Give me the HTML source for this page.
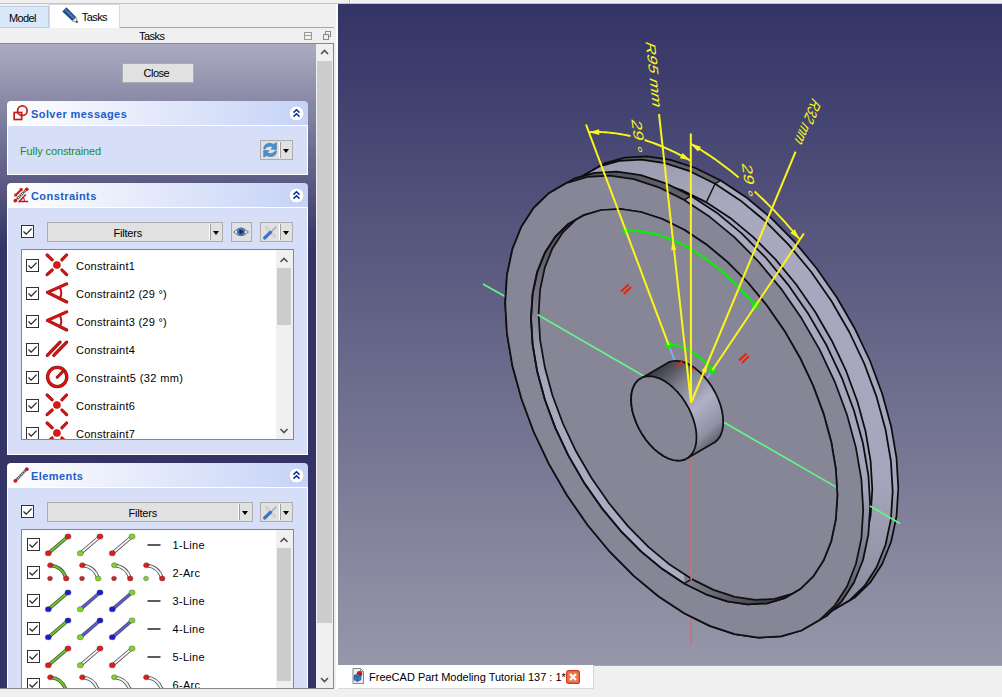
<!DOCTYPE html>
<html><head><meta charset="utf-8"><title>FreeCAD Part Modeling Tutorial 137</title>
<style>
*{box-sizing:border-box;margin:0;padding:0}
html,body{width:1002px;height:697px;overflow:hidden;background:#f0f0f0}
body{position:relative;font-family:"Liberation Sans",sans-serif;font-size:11px;color:#000}
.abs{position:absolute}
.t{position:absolute;white-space:nowrap;line-height:14px;height:14px}
#view{position:absolute;left:338px;top:4px;width:664px;height:661px;background:linear-gradient(#333366,#9797aa);overflow:hidden}
#panel{position:absolute;left:0;top:44px;width:316px;height:644px;background:linear-gradient(#ababc1 0,#333365 205px,#333365 100%);overflow:hidden}
.grp-h{position:absolute;left:7px;width:301px;height:24px;border-radius:4px 4px 0 0;background:linear-gradient(90deg,#ffffff 0,#f4f6fd 20%,#c6d3f7 100%)}
.grp-h .ti{position:absolute;left:24px;top:5.5px;font-weight:bold;color:#215dc6;font-size:11px;line-height:14px;white-space:nowrap;letter-spacing:0.42px}
.grp-b{position:absolute;left:7px;width:301px;background:#d6dff7;border:1px solid #fff}
.btn{position:absolute;background:#e1e1e1;border:1px solid #adadad}
.sep{position:absolute;width:1px;background:#a0a0a0}
.sepw{position:absolute;width:1px;background:#fff}
.arr{position:absolute;width:0;height:0;border-left:3.5px solid transparent;border-right:3.5px solid transparent;border-top:4px solid #000}
.cb{position:absolute;width:13px;height:13px;background:#fff;border:1px solid #333}
.list{position:absolute;background:#fff;border:1px solid #828790;overflow:hidden}
.sb{position:absolute;background:#f0f0f0}
.thumb{position:absolute;background:#cdcdcd}
.row{position:absolute;left:0;height:28px;width:254px}
</style></head><body>
<div class="abs" style="left:0;top:3px;width:1002px;height:1px;background:#c4c4c4"></div>
<div class="abs" style="left:349px;top:0;width:1px;height:3px;background:#b8b8b8"></div>
<div class="abs" style="left:350px;top:0;width:1px;height:3px;background:#fff"></div>
<div class="abs" style="left:0;top:27px;width:334px;height:1px;background:#a8a8a8"></div>
<div class="abs" style="left:0;top:6px;width:49px;height:22px;background:#d8e8f8;border:1px solid #c0d0e0;border-left:none"></div>
<div class="t" style="left:9px;top:11px;letter-spacing:-0.6px">Model</div>
<div class="abs" style="left:49px;top:4px;width:71px;height:24px;background:#fff;border:1px solid #d9d9d9;border-bottom:none"></div>
<svg class="abs" style="left:62px;top:7px;overflow:visible" width="16" height="16" viewBox="0 0 16 16" ><path d="M4.4 0.2 L0.3 4.4 L10.4 14 L14.2 10.3 Z" fill="#1f4a80"/><path d="M3.2 2.6 L12.6 11.9" stroke="#4a82c8" stroke-width="1.7"/><path d="M10.4 14 L14.2 10.3 L15.6 15.7 Z" fill="#f4f4f4" stroke="#555" stroke-width="0.5"/><path d="M13.2 14.9 L15.1 13.4 L15.7 15.8 Z" fill="#1a2440"/></svg>
<div class="t" style="left:81.7px;top:10px;letter-spacing:-0.55px">Tasks</div>
<div class="t" style="left:139px;top:29px;letter-spacing:-0.55px">Tasks</div>
<svg class="abs" style="left:300px;top:29px" width="34" height="14" viewBox="0 0 34 14"><rect x="4.5" y="3.5" width="7" height="7" fill="none" stroke="#9a9a9a"/><path d="M4.5 6.5 H11.5" stroke="#9a9a9a"/><rect x="25.5" y="2.5" width="5" height="5" fill="none" stroke="#8a8a8a"/><rect x="23.5" y="5.5" width="5" height="5" fill="#f0f0f0" stroke="#8a8a8a"/></svg>
<div class="abs" style="left:0;top:43px;width:334px;height:1px;background:#828790"></div>
<div class="sb" style="left:316px;top:44px;width:17px;height:644px"></div>
<div class="thumb" style="left:317px;top:61px;width:15px;height:562px"></div>
<svg class="abs" style="left:0;top:0;overflow:visible" width="1" height="1"><path d="M321.0 54.0 L324.5 50.5 L328.0 54.0" fill="none" stroke="#505050" stroke-width="1.6"/></svg>
<svg class="abs" style="left:0;top:0;overflow:visible" width="1" height="1"><path d="M321.0 678.0 L324.5 681.5 L328.0 678.0" fill="none" stroke="#505050" stroke-width="1.6"/></svg>
<div class="abs" style="left:333px;top:44px;width:1px;height:645px;background:#828790"></div>
<div class="abs" style="left:0;top:688px;width:334px;height:1px;background:#828790"></div>
<div class="abs" style="left:336px;top:4px;width:2px;height:685px;background:#fff"></div>
<div id="panel">
<div class="btn" style="left:122px;top:19px;width:72px;height:20px"></div>
<div class="t" style="left:143.5px;top:22px;letter-spacing:-0.5px">Close</div>
<div class="grp-h" style="top:57px"><svg class="abs" style="left:6px;top:4px" width="16" height="16" viewBox="0 0 16 16"><circle cx="9.35" cy="5.65" r="4.8" fill="none" stroke="#c81a1a" stroke-width="1.7"/><rect x="1.15" y="7.5" width="7.5" height="7" fill="none" stroke="#c81a1a" stroke-width="1.7"/></svg><div class="ti">Solver messages</div><svg class="abs" style="left:281px;top:4px" width="17" height="17" viewBox="0 0 17 17"><circle cx="8.5" cy="8.5" r="7.5" fill="#fff" stroke="#c3cdee" stroke-width="1"/><path d="M5.5 7.6 L8.5 4.8 L11.5 7.6 M5.5 11.6 L8.5 8.8 L11.5 11.6" fill="none" stroke="#0d2b9c" stroke-width="1.5"/></svg></div>
<div class="grp-b" style="top:81px;height:50px"></div>
<div class="t" style="left:20px;top:100px;color:#1f8b1f;letter-spacing:-0.12px">Fully constrained</div>
<div class="btn" style="left:260px;top:96px;width:33px;height:20px"></div>
<svg class="abs" style="left:263px;top:98px;overflow:visible" width="15" height="16" viewBox="0 0 15 16" ><path d="M0.6 6.6 C1 2 6 -0.4 10.6 2.4 L13.4 0.6 L13.6 7.4 L8 7.2 L10 5.2 C7 3.4 3.6 4.2 1.6 7.4 Z" fill="#4d8fd0" stroke="#2e6db0" stroke-width="0.5"/><path d="M13.6 9.2 C13.2 13.8 8.2 16.2 3.6 13.4 L0.8 15.2 L0.6 8.4 L6.2 8.6 L4.2 10.6 C7.2 12.4 10.6 11.6 12.6 8.4 Z" fill="#4d8fd0" stroke="#2e6db0" stroke-width="0.5"/></svg>
<div class="sepw" style="left:279px;top:98px;height:16px"></div><div class="sep" style="left:280px;top:98px;height:16px"></div>
<div class="arr" style="left:283px;top:105px"></div>
<div class="grp-h" style="top:139px"><svg class="abs" style="left:6px;top:4px" width="16" height="16" viewBox="0 0 16 16"><path d="M2.6 8.2 L8.3 2.5" stroke="#d81010" stroke-width="2"/><path d="M1.2 9.6 L1.6 6 L4.8 9.2 Z M9.7 1.1 L6.1 1.5 L9.3 4.7 Z" fill="#d81010"/><path d="M2.2 13.8 L13.8 2.2" stroke="#444" stroke-width="2.4"/><path d="M2.2 13.8 L13.8 2.2" stroke="#f4f4f4" stroke-width="1.4" stroke-dasharray="1 1"/><circle cx="2.3" cy="13.8" r="1.8" fill="#d81010"/><circle cx="13.8" cy="2.2" r="1.8" fill="#d81010"/><path d="M15.2 14.4 H6.2 L12.8 7.4" fill="none" stroke="#c01818" stroke-width="1.5"/><path d="M10.2 10.4 Q11.6 12 11.4 14.4" fill="none" stroke="#c01818" stroke-width="1.1"/></svg><div class="ti">Constraints</div><svg class="abs" style="left:281px;top:4px" width="17" height="17" viewBox="0 0 17 17"><circle cx="8.5" cy="8.5" r="7.5" fill="#fff" stroke="#c3cdee" stroke-width="1"/><path d="M5.5 7.6 L8.5 4.8 L11.5 7.6 M5.5 11.6 L8.5 8.8 L11.5 11.6" fill="none" stroke="#0d2b9c" stroke-width="1.5"/></svg></div>
<div class="grp-b" style="top:163px;height:248px"></div>
<div class="cb" style="left:21px;top:181px"><svg class="abs" style="left:0;top:0" width="11" height="11" viewBox="0 0 11 11"><path d="M1.5 5.5 L4.2 8.2 L9.6 2.6" fill="none" stroke="#222" stroke-width="1.2"/></svg></div>
<div class="btn" style="left:47px;top:178px;width:176px;height:20px"></div>
<div class="t" style="left:113.5px;top:182px;letter-spacing:-0.2px">Filters</div>
<div class="sepw" style="left:209px;top:180px;height:16px"></div><div class="sep" style="left:210px;top:180px;height:16px"></div>
<div class="arr" style="left:213px;top:187px"></div>
<div class="btn" style="left:231px;top:178px;width:21px;height:20px"></div>
<svg class="abs" style="left:233px;top:182px;overflow:visible" width="16" height="12" viewBox="0 0 16 12" ><path d="M0.6 6 Q8 -1.4 15.4 6 Q8 13.4 0.6 6 Z" fill="#fafafa" stroke="#6a6a6a" stroke-width="1"/><circle cx="8" cy="5.8" r="4.3" fill="#3f77c4"/><circle cx="8" cy="5.8" r="2.1" fill="#2a3040"/></svg>
<div class="btn" style="left:260px;top:178px;width:33px;height:20px"></div>
<svg class="abs" style="left:262px;top:180px;overflow:visible" width="16" height="16" viewBox="0 0 16 16" ><path d="M3.6 2.4 Q2.4 5.2 5.2 6.2 L12.2 13.8 L14 12.2 L7 4.8 Q7 1.6 3.6 2.4 Z" fill="#d6d6d6" stroke="#c2c2c2" stroke-width="0.6"/><path d="M14.3 2.6 L8.4 8.6" stroke="#9db4d4" stroke-width="1.9"/><path d="M8.4 8.4 L2.6 14" stroke="#3a74c0" stroke-width="3.2" stroke-linecap="round"/></svg>
<div class="sepw" style="left:279px;top:180px;height:16px"></div><div class="sep" style="left:280px;top:180px;height:16px"></div>
<div class="arr" style="left:283px;top:187px"></div>
<div class="list" style="left:21px;top:205px;width:273px;height:191px"><div class="row" style="top:2px"><div class="cb" style="left:4px;top:7px"><svg class="abs" style="left:0;top:0" width="11" height="11" viewBox="0 0 11 11"><path d="M1.5 5.5 L4.2 8.2 L9.6 2.6" fill="none" stroke="#222" stroke-width="1.2"/></svg></div><svg class="abs" style="left:24px;top:2px;overflow:visible" width="22" height="22" viewBox="0 0 22 22" ><path d="M1.1 1 L6.2 5.8 M20.6 1 L15.9 5.8 M1.1 20.6 L6.2 16 M20.6 20.6 L15.9 16" stroke="#8a1010" stroke-width="3.1" stroke-linecap="round"/><path d="M1.1 1 L6.2 5.8 M20.6 1 L15.9 5.8 M1.1 20.6 L6.2 16 M20.6 20.6 L15.9 16" stroke="#e01212" stroke-width="1.8" stroke-linecap="round"/><circle cx="10.9" cy="11" r="3.6" fill="#e01616" stroke="#a01010" stroke-width="0.5"/></svg><div class="t" style="left:54px;top:6.5px;letter-spacing:0.26px">Constraint1</div></div><div class="row" style="top:30px"><div class="cb" style="left:4px;top:7px"><svg class="abs" style="left:0;top:0" width="11" height="11" viewBox="0 0 11 11"><path d="M1.5 5.5 L4.2 8.2 L9.6 2.6" fill="none" stroke="#222" stroke-width="1.2"/></svg></div><svg class="abs" style="left:24px;top:2px;overflow:visible" width="22" height="22" viewBox="0 0 22 22" ><path d="M20.7 1.9 L1.4 10.4 L20.7 20" fill="none" stroke="#8a1010" stroke-width="3.1" stroke-linecap="round" stroke-linejoin="round"/><path d="M20.7 1.9 L1.4 10.4 L20.7 20" fill="none" stroke="#e01212" stroke-width="1.8" stroke-linecap="round" stroke-linejoin="round"/><path d="M14 6 Q16.6 11 14 16.2" fill="none" stroke="#c01212" stroke-width="2"/></svg><div class="t" style="left:54px;top:6.5px;letter-spacing:0.26px">Constraint2 (29 °)</div></div><div class="row" style="top:58px"><div class="cb" style="left:4px;top:7px"><svg class="abs" style="left:0;top:0" width="11" height="11" viewBox="0 0 11 11"><path d="M1.5 5.5 L4.2 8.2 L9.6 2.6" fill="none" stroke="#222" stroke-width="1.2"/></svg></div><svg class="abs" style="left:24px;top:2px;overflow:visible" width="22" height="22" viewBox="0 0 22 22" ><path d="M20.7 1.9 L1.4 10.4 L20.7 20" fill="none" stroke="#8a1010" stroke-width="3.1" stroke-linecap="round" stroke-linejoin="round"/><path d="M20.7 1.9 L1.4 10.4 L20.7 20" fill="none" stroke="#e01212" stroke-width="1.8" stroke-linecap="round" stroke-linejoin="round"/><path d="M14 6 Q16.6 11 14 16.2" fill="none" stroke="#c01212" stroke-width="2"/></svg><div class="t" style="left:54px;top:6.5px;letter-spacing:0.26px">Constraint3 (29 °)</div></div><div class="row" style="top:86px"><div class="cb" style="left:4px;top:7px"><svg class="abs" style="left:0;top:0" width="11" height="11" viewBox="0 0 11 11"><path d="M1.5 5.5 L4.2 8.2 L9.6 2.6" fill="none" stroke="#222" stroke-width="1.2"/></svg></div><svg class="abs" style="left:24px;top:2px;overflow:visible" width="22" height="22" viewBox="0 0 22 22" ><g stroke="#8a1010" stroke-width="3.2" stroke-linecap="round"><path d="M1.3 17.4 L14.1 4.2"/><path d="M7.8 17.4 L20.7 4.2"/></g><g stroke="#e01212" stroke-width="1.9" stroke-linecap="round"><path d="M1.3 17.4 L14.1 4.2"/><path d="M7.8 17.4 L20.7 4.2"/></g></svg><div class="t" style="left:54px;top:6.5px;letter-spacing:0.26px">Constraint4</div></div><div class="row" style="top:114px"><div class="cb" style="left:4px;top:7px"><svg class="abs" style="left:0;top:0" width="11" height="11" viewBox="0 0 11 11"><path d="M1.5 5.5 L4.2 8.2 L9.6 2.6" fill="none" stroke="#222" stroke-width="1.2"/></svg></div><svg class="abs" style="left:24px;top:2px;overflow:visible" width="22" height="22" viewBox="0 0 22 22" ><circle cx="11.2" cy="11" r="9.6" fill="none" stroke="#8a1010" stroke-width="3.3"/><circle cx="11.2" cy="11" r="9.6" fill="none" stroke="#e01212" stroke-width="2"/><path d="M11.2 11.2 L17.2 5" stroke="#8a1010" stroke-width="3" stroke-linecap="round"/><path d="M11.2 11.2 L17.2 5" stroke="#e01212" stroke-width="1.7" stroke-linecap="round"/></svg><div class="t" style="left:54px;top:6.5px;letter-spacing:0.37px">Constraint5 (32 mm)</div></div><div class="row" style="top:142px"><div class="cb" style="left:4px;top:7px"><svg class="abs" style="left:0;top:0" width="11" height="11" viewBox="0 0 11 11"><path d="M1.5 5.5 L4.2 8.2 L9.6 2.6" fill="none" stroke="#222" stroke-width="1.2"/></svg></div><svg class="abs" style="left:24px;top:2px;overflow:visible" width="22" height="22" viewBox="0 0 22 22" ><path d="M1.1 1 L6.2 5.8 M20.6 1 L15.9 5.8 M1.1 20.6 L6.2 16 M20.6 20.6 L15.9 16" stroke="#8a1010" stroke-width="3.1" stroke-linecap="round"/><path d="M1.1 1 L6.2 5.8 M20.6 1 L15.9 5.8 M1.1 20.6 L6.2 16 M20.6 20.6 L15.9 16" stroke="#e01212" stroke-width="1.8" stroke-linecap="round"/><circle cx="10.9" cy="11" r="3.6" fill="#e01616" stroke="#a01010" stroke-width="0.5"/></svg><div class="t" style="left:54px;top:6.5px;letter-spacing:0.26px">Constraint6</div></div><div class="row" style="top:170px"><div class="cb" style="left:4px;top:7px"><svg class="abs" style="left:0;top:0" width="11" height="11" viewBox="0 0 11 11"><path d="M1.5 5.5 L4.2 8.2 L9.6 2.6" fill="none" stroke="#222" stroke-width="1.2"/></svg></div><svg class="abs" style="left:24px;top:2px;overflow:visible" width="22" height="22" viewBox="0 0 22 22" ><path d="M1.1 1 L6.2 5.8 M20.6 1 L15.9 5.8 M1.1 20.6 L6.2 16 M20.6 20.6 L15.9 16" stroke="#8a1010" stroke-width="3.1" stroke-linecap="round"/><path d="M1.1 1 L6.2 5.8 M20.6 1 L15.9 5.8 M1.1 20.6 L6.2 16 M20.6 20.6 L15.9 16" stroke="#e01212" stroke-width="1.8" stroke-linecap="round"/><circle cx="10.9" cy="11" r="3.6" fill="#e01616" stroke="#a01010" stroke-width="0.5"/></svg><div class="t" style="left:54px;top:6.5px;letter-spacing:0.26px">Constraint7</div></div><div class="sb" style="left:254px;top:0;width:17px;height:189px"></div><div class="thumb" style="left:254.5px;top:18px;width:14.5px;height:57px"></div><svg class="abs" style="left:0;top:0;overflow:visible" width="1" height="1"><path d="M258.5 12.0 L262 8.5 L265.5 12.0" fill="none" stroke="#505050" stroke-width="1.6"/></svg><svg class="abs" style="left:0;top:0;overflow:visible" width="1" height="1"><path d="M258.5 179.0 L262 182.5 L265.5 179.0" fill="none" stroke="#505050" stroke-width="1.6"/></svg></div>
<div class="grp-h" style="top:419px"><svg class="abs" style="left:6px;top:4px" width="16" height="16" viewBox="0 0 16 16"><path d="M2.4 13.8 L13.8 2.2" stroke="#444" stroke-width="2.4"/><path d="M2.4 13.8 L13.8 2.2" stroke="#f4f4f4" stroke-width="1.4" stroke-dasharray="1 1"/><circle cx="2.4" cy="13.8" r="1.9" fill="#d81010"/><circle cx="13.8" cy="2.2" r="1.9" fill="#d81010"/></svg><div class="ti">Elements</div><svg class="abs" style="left:281px;top:4px" width="17" height="17" viewBox="0 0 17 17"><circle cx="8.5" cy="8.5" r="7.5" fill="#fff" stroke="#c3cdee" stroke-width="1"/><path d="M5.5 7.6 L8.5 4.8 L11.5 7.6 M5.5 11.6 L8.5 8.8 L11.5 11.6" fill="none" stroke="#0d2b9c" stroke-width="1.5"/></svg></div>
<div class="grp-b" style="top:443px;height:220px"></div>
<div class="cb" style="left:21px;top:461px"><svg class="abs" style="left:0;top:0" width="11" height="11" viewBox="0 0 11 11"><path d="M1.5 5.5 L4.2 8.2 L9.6 2.6" fill="none" stroke="#222" stroke-width="1.2"/></svg></div>
<div class="btn" style="left:47px;top:458px;width:206px;height:20px"></div>
<div class="t" style="left:128.5px;top:462px;letter-spacing:-0.2px">Filters</div>
<div class="sepw" style="left:238px;top:460px;height:16px"></div><div class="sep" style="left:239px;top:460px;height:16px"></div>
<div class="arr" style="left:242px;top:467px"></div>
<div class="btn" style="left:260px;top:458px;width:33px;height:20px"></div>
<svg class="abs" style="left:262px;top:460px;overflow:visible" width="16" height="16" viewBox="0 0 16 16" ><path d="M3.6 2.4 Q2.4 5.2 5.2 6.2 L12.2 13.8 L14 12.2 L7 4.8 Q7 1.6 3.6 2.4 Z" fill="#d6d6d6" stroke="#c2c2c2" stroke-width="0.6"/><path d="M14.3 2.6 L8.4 8.6" stroke="#9db4d4" stroke-width="1.9"/><path d="M8.4 8.4 L2.6 14" stroke="#3a74c0" stroke-width="3.2" stroke-linecap="round"/></svg>
<div class="sepw" style="left:279px;top:460px;height:16px"></div><div class="sep" style="left:280px;top:460px;height:16px"></div>
<div class="arr" style="left:283px;top:467px"></div>
<div class="list" style="left:21px;top:485px;width:273px;height:170px"><div class="row" style="top:1px"><div class="cb" style="left:5px;top:7px"><svg class="abs" style="left:0;top:0" width="11" height="11" viewBox="0 0 11 11"><path d="M1.5 5.5 L4.2 8.2 L9.6 2.6" fill="none" stroke="#222" stroke-width="1.2"/></svg></div><svg class="abs" style="left:0;top:3px;overflow:visible" width="150" height="22"><g transform="translate(23,0)"><path d="M3.3 19.3 L23 2.5" stroke="#555" stroke-width="3.6" stroke-linecap="round"/><path d="M3.3 19.3 L23 2.5" stroke="#69c81e" stroke-width="1.9" stroke-linecap="round"/><rect x="0.3" y="16.8" width="6" height="5" rx="2.2" fill="#e01b1b" stroke="#444" stroke-width="0.4"/><rect x="20" y="0" width="6" height="5" rx="2.2" fill="#e01b1b" stroke="#444" stroke-width="0.4"/></g><g transform="translate(55,0)"><path d="M3.3 19.3 L23 2.5" stroke="#555" stroke-width="3.6" stroke-linecap="round"/><path d="M3.3 19.3 L23 2.5" stroke="#f2f2f2" stroke-width="1.9" stroke-linecap="round"/><rect x="0.3" y="16.8" width="6" height="5" rx="2.2" fill="#7fd42a" stroke="#444" stroke-width="0.4"/><rect x="20" y="0" width="6" height="5" rx="2.2" fill="#e01b1b" stroke="#444" stroke-width="0.4"/></g><g transform="translate(87,0)"><path d="M3.3 19.3 L23 2.5" stroke="#555" stroke-width="3.6" stroke-linecap="round"/><path d="M3.3 19.3 L23 2.5" stroke="#f2f2f2" stroke-width="1.9" stroke-linecap="round"/><rect x="0.3" y="16.8" width="6" height="5" rx="2.2" fill="#e01b1b" stroke="#444" stroke-width="0.4"/><rect x="20" y="0" width="6" height="5" rx="2.2" fill="#7fd42a" stroke="#444" stroke-width="0.4"/></g><path d="M125.5 11 H138.5" stroke="#333" stroke-width="1.6"/></svg><div class="t" style="left:150.5px;top:7px;letter-spacing:0.3px">1-Line</div></div><div class="row" style="top:29px"><div class="cb" style="left:5px;top:7px"><svg class="abs" style="left:0;top:0" width="11" height="11" viewBox="0 0 11 11"><path d="M1.5 5.5 L4.2 8.2 L9.6 2.6" fill="none" stroke="#222" stroke-width="1.2"/></svg></div><svg class="abs" style="left:0;top:3px;overflow:visible" width="150" height="22"><g transform="translate(25,0)"><path d="M3.3 3.2 Q15.5 4.5 19.2 16.5" fill="none" stroke="#555" stroke-width="3.6" stroke-linecap="round"/><path d="M3.3 3.2 Q15.5 4.5 19.2 16.5" fill="none" stroke="#69c81e" stroke-width="1.9" stroke-linecap="round"/><ellipse cx="3.3" cy="3.2" rx="2.8" ry="2.5" fill="#e01b1b" stroke="#444" stroke-width="0.4"/><ellipse cx="19.2" cy="16.5" rx="2.8" ry="2.5" fill="#e01b1b" stroke="#444" stroke-width="0.4"/><ellipse cx="3" cy="16.5" rx="2.5" ry="2.3" fill="#e01b1b" stroke="#444" stroke-width="0.4"/></g><g transform="translate(57,0)"><path d="M3.3 3.2 Q15.5 4.5 19.2 16.5" fill="none" stroke="#555" stroke-width="3.6" stroke-linecap="round"/><path d="M3.3 3.2 Q15.5 4.5 19.2 16.5" fill="none" stroke="#f2f2f2" stroke-width="1.9" stroke-linecap="round"/><ellipse cx="3.3" cy="3.2" rx="2.8" ry="2.5" fill="#e01b1b" stroke="#444" stroke-width="0.4"/><ellipse cx="19.2" cy="16.5" rx="2.8" ry="2.5" fill="#7fd42a" stroke="#444" stroke-width="0.4"/><ellipse cx="3" cy="16.5" rx="2.5" ry="2.3" fill="#e01b1b" stroke="#444" stroke-width="0.4"/></g><g transform="translate(89,0)"><path d="M3.3 3.2 Q15.5 4.5 19.2 16.5" fill="none" stroke="#555" stroke-width="3.6" stroke-linecap="round"/><path d="M3.3 3.2 Q15.5 4.5 19.2 16.5" fill="none" stroke="#f2f2f2" stroke-width="1.9" stroke-linecap="round"/><ellipse cx="3.3" cy="3.2" rx="2.8" ry="2.5" fill="#7fd42a" stroke="#444" stroke-width="0.4"/><ellipse cx="19.2" cy="16.5" rx="2.8" ry="2.5" fill="#e01b1b" stroke="#444" stroke-width="0.4"/><ellipse cx="3" cy="16.5" rx="2.5" ry="2.3" fill="#e01b1b" stroke="#444" stroke-width="0.4"/></g><g transform="translate(121,0)"><path d="M3.3 3.2 Q15.5 4.5 19.2 16.5" fill="none" stroke="#555" stroke-width="3.6" stroke-linecap="round"/><path d="M3.3 3.2 Q15.5 4.5 19.2 16.5" fill="none" stroke="#f2f2f2" stroke-width="1.9" stroke-linecap="round"/><ellipse cx="3.3" cy="3.2" rx="2.8" ry="2.5" fill="#e01b1b" stroke="#444" stroke-width="0.4"/><ellipse cx="19.2" cy="16.5" rx="2.8" ry="2.5" fill="#e01b1b" stroke="#444" stroke-width="0.4"/><ellipse cx="3" cy="16.5" rx="2.5" ry="2.3" fill="#7fd42a" stroke="#444" stroke-width="0.4"/></g></svg><div class="t" style="left:150.5px;top:7px;letter-spacing:0.3px">2-Arc</div></div><div class="row" style="top:57px"><div class="cb" style="left:5px;top:7px"><svg class="abs" style="left:0;top:0" width="11" height="11" viewBox="0 0 11 11"><path d="M1.5 5.5 L4.2 8.2 L9.6 2.6" fill="none" stroke="#222" stroke-width="1.2"/></svg></div><svg class="abs" style="left:0;top:3px;overflow:visible" width="150" height="22"><g transform="translate(23,0)"><path d="M3.3 19.3 L23 2.5" stroke="#555" stroke-width="3.6" stroke-linecap="round"/><path d="M3.3 19.3 L23 2.5" stroke="#69c81e" stroke-width="1.9" stroke-linecap="round"/><rect x="0.3" y="16.8" width="6" height="5" rx="2.2" fill="#1b1bd0" stroke="#444" stroke-width="0.4"/><rect x="20" y="0" width="6" height="5" rx="2.2" fill="#1b1bd0" stroke="#444" stroke-width="0.4"/></g><g transform="translate(55,0)"><path d="M3.3 19.3 L23 2.5" stroke="#555" stroke-width="3.6" stroke-linecap="round"/><path d="M3.3 19.3 L23 2.5" stroke="#5a5ae0" stroke-width="1.9" stroke-linecap="round"/><rect x="0.3" y="16.8" width="6" height="5" rx="2.2" fill="#7fd42a" stroke="#444" stroke-width="0.4"/><rect x="20" y="0" width="6" height="5" rx="2.2" fill="#1b1bd0" stroke="#444" stroke-width="0.4"/></g><g transform="translate(87,0)"><path d="M3.3 19.3 L23 2.5" stroke="#555" stroke-width="3.6" stroke-linecap="round"/><path d="M3.3 19.3 L23 2.5" stroke="#5a5ae0" stroke-width="1.9" stroke-linecap="round"/><rect x="0.3" y="16.8" width="6" height="5" rx="2.2" fill="#1b1bd0" stroke="#444" stroke-width="0.4"/><rect x="20" y="0" width="6" height="5" rx="2.2" fill="#7fd42a" stroke="#444" stroke-width="0.4"/></g><path d="M125.5 11 H138.5" stroke="#333" stroke-width="1.6"/></svg><div class="t" style="left:150.5px;top:7px;letter-spacing:0.3px">3-Line</div></div><div class="row" style="top:85px"><div class="cb" style="left:5px;top:7px"><svg class="abs" style="left:0;top:0" width="11" height="11" viewBox="0 0 11 11"><path d="M1.5 5.5 L4.2 8.2 L9.6 2.6" fill="none" stroke="#222" stroke-width="1.2"/></svg></div><svg class="abs" style="left:0;top:3px;overflow:visible" width="150" height="22"><g transform="translate(23,0)"><path d="M3.3 19.3 L23 2.5" stroke="#555" stroke-width="3.6" stroke-linecap="round"/><path d="M3.3 19.3 L23 2.5" stroke="#69c81e" stroke-width="1.9" stroke-linecap="round"/><rect x="0.3" y="16.8" width="6" height="5" rx="2.2" fill="#1b1bd0" stroke="#444" stroke-width="0.4"/><rect x="20" y="0" width="6" height="5" rx="2.2" fill="#1b1bd0" stroke="#444" stroke-width="0.4"/></g><g transform="translate(55,0)"><path d="M3.3 19.3 L23 2.5" stroke="#555" stroke-width="3.6" stroke-linecap="round"/><path d="M3.3 19.3 L23 2.5" stroke="#5a5ae0" stroke-width="1.9" stroke-linecap="round"/><rect x="0.3" y="16.8" width="6" height="5" rx="2.2" fill="#7fd42a" stroke="#444" stroke-width="0.4"/><rect x="20" y="0" width="6" height="5" rx="2.2" fill="#1b1bd0" stroke="#444" stroke-width="0.4"/></g><g transform="translate(87,0)"><path d="M3.3 19.3 L23 2.5" stroke="#555" stroke-width="3.6" stroke-linecap="round"/><path d="M3.3 19.3 L23 2.5" stroke="#5a5ae0" stroke-width="1.9" stroke-linecap="round"/><rect x="0.3" y="16.8" width="6" height="5" rx="2.2" fill="#1b1bd0" stroke="#444" stroke-width="0.4"/><rect x="20" y="0" width="6" height="5" rx="2.2" fill="#7fd42a" stroke="#444" stroke-width="0.4"/></g><path d="M125.5 11 H138.5" stroke="#333" stroke-width="1.6"/></svg><div class="t" style="left:150.5px;top:7px;letter-spacing:0.3px">4-Line</div></div><div class="row" style="top:113px"><div class="cb" style="left:5px;top:7px"><svg class="abs" style="left:0;top:0" width="11" height="11" viewBox="0 0 11 11"><path d="M1.5 5.5 L4.2 8.2 L9.6 2.6" fill="none" stroke="#222" stroke-width="1.2"/></svg></div><svg class="abs" style="left:0;top:3px;overflow:visible" width="150" height="22"><g transform="translate(23,0)"><path d="M3.3 19.3 L23 2.5" stroke="#555" stroke-width="3.6" stroke-linecap="round"/><path d="M3.3 19.3 L23 2.5" stroke="#69c81e" stroke-width="1.9" stroke-linecap="round"/><rect x="0.3" y="16.8" width="6" height="5" rx="2.2" fill="#e01b1b" stroke="#444" stroke-width="0.4"/><rect x="20" y="0" width="6" height="5" rx="2.2" fill="#e01b1b" stroke="#444" stroke-width="0.4"/></g><g transform="translate(55,0)"><path d="M3.3 19.3 L23 2.5" stroke="#555" stroke-width="3.6" stroke-linecap="round"/><path d="M3.3 19.3 L23 2.5" stroke="#f2f2f2" stroke-width="1.9" stroke-linecap="round"/><rect x="0.3" y="16.8" width="6" height="5" rx="2.2" fill="#7fd42a" stroke="#444" stroke-width="0.4"/><rect x="20" y="0" width="6" height="5" rx="2.2" fill="#e01b1b" stroke="#444" stroke-width="0.4"/></g><g transform="translate(87,0)"><path d="M3.3 19.3 L23 2.5" stroke="#555" stroke-width="3.6" stroke-linecap="round"/><path d="M3.3 19.3 L23 2.5" stroke="#f2f2f2" stroke-width="1.9" stroke-linecap="round"/><rect x="0.3" y="16.8" width="6" height="5" rx="2.2" fill="#e01b1b" stroke="#444" stroke-width="0.4"/><rect x="20" y="0" width="6" height="5" rx="2.2" fill="#7fd42a" stroke="#444" stroke-width="0.4"/></g><path d="M125.5 11 H138.5" stroke="#333" stroke-width="1.6"/></svg><div class="t" style="left:150.5px;top:7px;letter-spacing:0.3px">5-Line</div></div><div class="row" style="top:141px"><div class="cb" style="left:5px;top:7px"><svg class="abs" style="left:0;top:0" width="11" height="11" viewBox="0 0 11 11"><path d="M1.5 5.5 L4.2 8.2 L9.6 2.6" fill="none" stroke="#222" stroke-width="1.2"/></svg></div><svg class="abs" style="left:0;top:3px;overflow:visible" width="150" height="22"><g transform="translate(25,0)"><path d="M3.3 3.2 Q15.5 4.5 19.2 16.5" fill="none" stroke="#555" stroke-width="3.6" stroke-linecap="round"/><path d="M3.3 3.2 Q15.5 4.5 19.2 16.5" fill="none" stroke="#69c81e" stroke-width="1.9" stroke-linecap="round"/><ellipse cx="3.3" cy="3.2" rx="2.8" ry="2.5" fill="#e01b1b" stroke="#444" stroke-width="0.4"/><ellipse cx="19.2" cy="16.5" rx="2.8" ry="2.5" fill="#e01b1b" stroke="#444" stroke-width="0.4"/><ellipse cx="3" cy="16.5" rx="2.5" ry="2.3" fill="#e01b1b" stroke="#444" stroke-width="0.4"/></g><g transform="translate(57,0)"><path d="M3.3 3.2 Q15.5 4.5 19.2 16.5" fill="none" stroke="#555" stroke-width="3.6" stroke-linecap="round"/><path d="M3.3 3.2 Q15.5 4.5 19.2 16.5" fill="none" stroke="#f2f2f2" stroke-width="1.9" stroke-linecap="round"/><ellipse cx="3.3" cy="3.2" rx="2.8" ry="2.5" fill="#e01b1b" stroke="#444" stroke-width="0.4"/><ellipse cx="19.2" cy="16.5" rx="2.8" ry="2.5" fill="#7fd42a" stroke="#444" stroke-width="0.4"/><ellipse cx="3" cy="16.5" rx="2.5" ry="2.3" fill="#e01b1b" stroke="#444" stroke-width="0.4"/></g><g transform="translate(89,0)"><path d="M3.3 3.2 Q15.5 4.5 19.2 16.5" fill="none" stroke="#555" stroke-width="3.6" stroke-linecap="round"/><path d="M3.3 3.2 Q15.5 4.5 19.2 16.5" fill="none" stroke="#f2f2f2" stroke-width="1.9" stroke-linecap="round"/><ellipse cx="3.3" cy="3.2" rx="2.8" ry="2.5" fill="#7fd42a" stroke="#444" stroke-width="0.4"/><ellipse cx="19.2" cy="16.5" rx="2.8" ry="2.5" fill="#e01b1b" stroke="#444" stroke-width="0.4"/><ellipse cx="3" cy="16.5" rx="2.5" ry="2.3" fill="#e01b1b" stroke="#444" stroke-width="0.4"/></g><g transform="translate(121,0)"><path d="M3.3 3.2 Q15.5 4.5 19.2 16.5" fill="none" stroke="#555" stroke-width="3.6" stroke-linecap="round"/><path d="M3.3 3.2 Q15.5 4.5 19.2 16.5" fill="none" stroke="#f2f2f2" stroke-width="1.9" stroke-linecap="round"/><ellipse cx="3.3" cy="3.2" rx="2.8" ry="2.5" fill="#e01b1b" stroke="#444" stroke-width="0.4"/><ellipse cx="19.2" cy="16.5" rx="2.8" ry="2.5" fill="#e01b1b" stroke="#444" stroke-width="0.4"/><ellipse cx="3" cy="16.5" rx="2.5" ry="2.3" fill="#7fd42a" stroke="#444" stroke-width="0.4"/></g></svg><div class="t" style="left:150.5px;top:7px;letter-spacing:0.3px">6-Arc</div></div><div class="sb" style="left:254px;top:0;width:17px;height:170px"></div><div class="thumb" style="left:254.5px;top:18px;width:14.5px;height:133px"></div><svg class="abs" style="left:0;top:0;overflow:visible" width="1" height="1"><path d="M258.5 12.0 L262 8.5 L265.5 12.0" fill="none" stroke="#505050" stroke-width="1.6"/></svg></div>
</div>
<div id="view">
<svg class="abs" style="left:0;top:0" width="664" height="661" viewBox="338 4 664 661">
<defs>
<linearGradient id="gRim" gradientUnits="userSpaceOnUse" x1="0" y1="300" x2="0" y2="615"><stop offset="0" stop-color="#a9a9c0"/><stop offset="0.6" stop-color="#a4a4ba"/><stop offset="0.8" stop-color="#7a7a8c"/><stop offset="1" stop-color="#4c4c56"/></linearGradient>
<linearGradient id="gCone" gradientUnits="userSpaceOnUse" x1="0" y1="160" x2="0" y2="615"><stop offset="0" stop-color="#9c9cb0"/><stop offset="0.1" stop-color="#a8a8be"/><stop offset="0.7" stop-color="#a6a6bc"/><stop offset="1" stop-color="#8a8a9c"/></linearGradient>
<linearGradient id="gDark" gradientUnits="userSpaceOnUse" x1="560" y1="0" x2="700" y2="0"><stop offset="0" stop-color="#4c4c56"/><stop offset="1" stop-color="#64646f"/></linearGradient>
<linearGradient id="gGroove" gradientUnits="userSpaceOnUse" x1="0" y1="196" x2="0" y2="530"><stop offset="0" stop-color="#55555f"/><stop offset="0.03" stop-color="#a4a4ba"/><stop offset="0.88" stop-color="#a4a4ba"/><stop offset="1" stop-color="#4a4a54"/></linearGradient>
<linearGradient id="gHub" gradientUnits="userSpaceOnUse" x1="650" y1="368" x2="722" y2="450"><stop offset="0" stop-color="#34343b"/><stop offset="0.12" stop-color="#4e4e58"/><stop offset="0.3" stop-color="#82828f"/><stop offset="0.55" stop-color="#b0b0c8"/><stop offset="0.78" stop-color="#9292a6"/><stop offset="0.92" stop-color="#5a5a66"/><stop offset="1" stop-color="#38383f"/></linearGradient>
<linearGradient id="gWallD" gradientUnits="userSpaceOnUse" x1="690" y1="0" x2="775" y2="0"><stop offset="0" stop-color="#7e7e8c"/><stop offset="0.5" stop-color="#5a5a65"/><stop offset="1" stop-color="#3e3e46"/></linearGradient>
<linearGradient id="gWall" gradientUnits="userSpaceOnUse" x1="560" y1="220" x2="600" y2="520"><stop offset="0" stop-color="#484852"/><stop offset="0.27" stop-color="#7e7e8d"/><stop offset="0.4" stop-color="#9a9aae"/><stop offset="0.53" stop-color="#a8a8bf"/><stop offset="1" stop-color="#ababc2"/></linearGradient>
</defs>
<path d="M483 284 L520 305" stroke="#66f487" stroke-width="1.7"/>
<path d="M691.2 600 L691.2 644.6" stroke="#dc6868" stroke-width="1.6"/>
<clipPath id="cl1"><path d="M772.6 150.5 L368.7 383.7 L300 383.7 L300 0 L772.6 0 Z"/></clipPath>
<path d="M537.5 286.3 L539.3 258.1 L544.7 232.7 L553.5 210.4 L565.7 191.7 L580.8 177.0 L586.5 173.8 L604.4 163.4 L624.7 157.6 L646.9 156.4 L670.6 159.9 L695.4 168.0 L720.7 180.5 L746.0 197.2 L770.7 217.7 L794.5 241.6 L816.7 268.5 L837.0 297.7 L854.9 328.8 L870.1 361.0 L882.2 393.7 L891.1 426.2 L896.5 457.9 L898.3 488.1 L896.5 516.3 L891.1 541.7 L882.2 564.0 L870.1 582.7 L854.9 597.4 L837.0 607.7 L831.4 611.0 L811.1 616.8 L788.8 618.0 L765.1 614.5 L740.3 606.4 L715.1 593.9 L689.8 577.2 L665.0 556.7 L641.3 532.8 L619.1 505.9 L598.8 476.7 L580.8 445.6 L565.7 413.4 L553.5 380.7 L544.7 348.2 L539.3 316.5 Z" fill="url(#gRim)"/>
<path d="M537.5 286.3 L539.3 258.1 L544.7 232.7 L553.5 210.4 L565.7 191.7 L580.8 177.0 L586.5 173.8 L604.4 163.4 L624.7 157.6 L646.9 156.4 L670.6 159.9 L695.4 168.0 L720.7 180.5 L746.0 197.2 L770.7 217.7 L794.5 241.6 L816.7 268.5 L837.0 297.7 L854.9 328.8 L870.1 361.0 L882.2 393.7 L891.1 426.2 L896.5 457.9 L898.3 488.1 L896.5 516.3 L891.1 541.7 L882.2 564.0 L870.1 582.7 L854.9 597.4 L837.0 607.7 L831.4 611.0 L811.1 616.8 L788.8 618.0 L765.1 614.5 L740.3 606.4 L715.1 593.9 L689.8 577.2 L665.0 556.7 L641.3 532.8 L619.1 505.9 L598.8 476.7 L580.8 445.6 L565.7 413.4 L553.5 380.7 L544.7 348.2 L539.3 316.5 Z" fill="url(#gDark)" clip-path="url(#cl1)"/>
<path d="M537.5 286.3 L539.3 258.1 L544.7 232.7 L553.5 210.4 L565.7 191.7 L580.8 177.0 L586.5 173.8 L604.4 163.4 L624.7 157.6 L646.9 156.4 L670.6 159.9 L695.4 168.0 L720.7 180.5 L746.0 197.2 L770.7 217.7 L794.5 241.6 L816.7 268.5 L837.0 297.7 L854.9 328.8 L870.1 361.0 L882.2 393.7 L891.1 426.2 L896.5 457.9 L898.3 488.1 L896.5 516.3 L891.1 541.7 L882.2 564.0 L870.1 582.7 L854.9 597.4 L837.0 607.7 L831.4 611.0 L811.1 616.8 L788.8 618.0 L765.1 614.5 L740.3 606.4 L715.1 593.9 L689.8 577.2 L665.0 556.7 L641.3 532.8 L619.1 505.9 L598.8 476.7 L580.8 445.6 L565.7 413.4 L553.5 380.7 L544.7 348.2 L539.3 316.5 Z" fill="none" stroke="#0c0c10" stroke-width="1.75" stroke-linejoin="round"/>
<path d="M720.7 180.5 L715.1 183.7" stroke="#101014" stroke-width="1.4"/>
<path d="M537.5 286.3 L539.3 258.1 L544.7 232.7 L553.5 210.4 L565.7 191.7 L580.8 177.0 L598.8 166.7 L619.1 160.9 L641.3 159.7 L665.0 163.2 L689.8 171.2 L715.1 183.7 L740.3 200.4 L765.1 220.9 L788.8 244.9 L811.1 271.7 L831.4 301.0 L849.3 332.0 L864.5 364.2 L876.6 396.9 L885.5 429.4 L890.9 461.1 L892.7 491.4 L890.9 519.5 L885.5 545.0 L876.6 567.3 L864.5 585.9 L849.3 600.6 L831.4 611.0 L811.1 616.8 L788.8 618.0 L765.1 614.5 L740.3 606.4 L715.1 593.9 L689.8 577.2 L665.0 556.7 L641.3 532.8 L637.5 528.5 L616.7 503.4 L597.7 476.0 L580.9 446.9 L566.7 416.7 L555.3 386.1 L553.5 380.7 L544.7 348.2 L539.3 316.5 Z" fill="url(#gCone)" stroke="#0c0c10" stroke-width="1.75" stroke-linejoin="round"/>
<path d="M715.1 183.7 L706.6 201.6" stroke="#101014" stroke-width="1.4"/>
<path d="M530.4 304.1 L532.1 277.9 L537.2 254.1 L545.4 233.3 L556.7 215.9 L570.9 202.2 L581.4 196.1 L598.2 186.5 L617.1 181.0 L637.8 179.9 L660.0 183.2 L683.1 190.7 L706.6 202.4 L730.2 217.9 L753.3 237.1 L775.5 259.4 L796.2 284.5 L815.1 311.7 L831.8 340.7 L846.0 370.7 L857.3 401.2 L865.6 431.6 L870.6 461.1 L872.3 489.3 L870.6 515.6 L865.6 539.3 L857.3 560.2 L846.0 577.6 L831.8 591.2 L804.6 607.0 L785.7 612.4 L764.9 613.5 L742.8 610.3 L719.7 602.7 L696.1 591.1 L672.5 575.5 L649.4 556.4 L627.3 534.0 L606.5 509.0 L587.6 481.7 L570.9 452.7 L556.7 422.7 L545.4 392.2 L537.2 361.9 L532.1 332.3 Z" fill="url(#gGroove)" stroke="#0c0c10" stroke-width="1.75" stroke-linejoin="round"/>
<clipPath id="cl2"><path d="M743.2 165.9 L337.8 399.9 L300 399.9 L300 0 L743.2 0 Z"/></clipPath>
<path d="M505.2 303.3 L507.0 274.9 L512.4 249.3 L521.4 226.8 L533.6 208.0 L548.9 193.2 L555.9 189.1 L567.0 182.8 L574.0 178.7 L594.4 172.8 L616.8 171.6 L640.8 175.2 L665.7 183.3 L691.2 195.9 L716.7 212.7 L741.6 233.4 L765.6 257.5 L788.0 284.6 L808.4 314.1 L826.5 345.3 L841.8 377.8 L854.0 410.7 L863.0 443.5 L868.4 475.5 L870.2 505.9 L868.4 534.3 L863.0 560.0 L854.0 582.5 L841.8 601.3 L826.5 616.1 L808.4 626.5 L801.4 630.5 L781.0 636.4 L758.5 637.6 L734.6 634.1 L709.7 626.0 L684.2 613.3 L658.7 596.5 L633.8 575.9 L609.8 551.7 L587.4 524.7 L567.0 495.2 L548.9 463.9 L533.6 431.5 L521.4 398.5 L512.4 365.7 L507.0 333.8 Z" fill="url(#gRim)"/>
<path d="M505.2 303.3 L507.0 274.9 L512.4 249.3 L521.4 226.8 L533.6 208.0 L548.9 193.2 L555.9 189.1 L567.0 182.8 L574.0 178.7 L594.4 172.8 L616.8 171.6 L640.8 175.2 L665.7 183.3 L691.2 195.9 L716.7 212.7 L741.6 233.4 L765.6 257.5 L788.0 284.6 L808.4 314.1 L826.5 345.3 L841.8 377.8 L854.0 410.7 L863.0 443.5 L868.4 475.5 L870.2 505.9 L868.4 534.3 L863.0 560.0 L854.0 582.5 L841.8 601.3 L826.5 616.1 L808.4 626.5 L801.4 630.5 L781.0 636.4 L758.5 637.6 L734.6 634.1 L709.7 626.0 L684.2 613.3 L658.7 596.5 L633.8 575.9 L609.8 551.7 L587.4 524.7 L567.0 495.2 L548.9 463.9 L533.6 431.5 L521.4 398.5 L512.4 365.7 L507.0 333.8 Z" fill="url(#gDark)" clip-path="url(#cl2)"/>
<path d="M505.2 303.3 L507.0 274.9 L512.4 249.3 L521.4 226.8 L533.6 208.0 L548.9 193.2 L555.9 189.1 L567.0 182.8 L574.0 178.7 L594.4 172.8 L616.8 171.6 L640.8 175.2 L665.7 183.3 L691.2 195.9 L716.7 212.7 L741.6 233.4 L765.6 257.5 L788.0 284.6 L808.4 314.1 L826.5 345.3 L841.8 377.8 L854.0 410.7 L863.0 443.5 L868.4 475.5 L870.2 505.9 L868.4 534.3 L863.0 560.0 L854.0 582.5 L841.8 601.3 L826.5 616.1 L808.4 626.5 L801.4 630.5 L781.0 636.4 L758.5 637.6 L734.6 634.1 L709.7 626.0 L684.2 613.3 L658.7 596.5 L633.8 575.9 L609.8 551.7 L587.4 524.7 L567.0 495.2 L548.9 463.9 L533.6 431.5 L521.4 398.5 L512.4 365.7 L507.0 333.8 Z" fill="none" stroke="#0c0c10" stroke-width="1.75" stroke-linejoin="round"/>
<path d="M691.2 195.9 L684.2 199.9" stroke="#101014" stroke-width="1.4"/>
<path d="M863.2 510.0 L861.4 479.5 L855.9 447.6 L847.0 414.8 L834.8 381.8 L819.5 349.4 L801.4 318.1 L781.0 288.6 L758.5 261.6 L734.6 237.4 L709.7 216.8 L684.2 199.9 L658.7 187.3 L633.8 179.2 L609.8 175.7 L587.4 176.9 L567.0 182.8 L548.9 193.2 L533.6 208.0 L521.4 226.8 L512.4 249.3 L507.0 274.9 L505.2 303.3 L507.0 333.8 L512.4 365.7 L521.4 398.5 L533.6 431.5 L548.9 463.9 L567.0 495.2 L587.4 524.7 L609.8 551.7 L633.8 575.9 L658.7 596.5 L684.2 613.3 L709.7 625.9 L734.6 634.1 L758.5 637.6 L781.0 636.4 L801.4 630.5 L819.5 620.1 L834.8 605.3 L847.0 586.5 L855.9 564.0 L861.4 538.4 Z" fill="#868696" stroke="#101014" stroke-width="1.75" stroke-linejoin="round" />
<clipPath id="cOpen"><path d="M837.4 495.1 L835.8 469.0 L831.2 441.7 L823.5 413.6 L813.0 385.4 L799.9 357.7 L784.5 330.9 L767.0 305.7 L747.8 282.5 L727.3 261.9 L706.0 244.2 L684.2 229.8 L662.4 219.0 L641.0 212.0 L620.6 209.0 L601.4 210.0 L583.9 215.1 L568.4 224.0 L555.3 236.6 L544.9 252.7 L537.2 272.0 L532.6 293.9 L531.0 318.2 L532.6 344.3 L537.2 371.6 L544.9 399.7 L555.3 427.9 L568.4 455.6 L583.9 482.4 L601.4 507.6 L620.6 530.8 L641.0 551.4 L662.4 569.1 L684.2 583.5 L706.0 594.3 L727.3 601.3 L747.8 604.3 L767.0 603.3 L784.5 598.2 L799.9 589.3 L813.0 576.7 L823.5 560.6 L831.2 541.3 L835.8 519.4 Z"/></clipPath>
<path d="M837.4 495.1 L835.8 469.0 L831.2 441.7 L823.5 413.6 L813.0 385.4 L799.9 357.7 L784.5 330.9 L767.0 305.7 L747.8 282.5 L727.3 261.9 L706.0 244.2 L684.2 229.8 L662.4 219.0 L641.0 212.0 L620.6 209.0 L601.4 210.0 L583.9 215.1 L568.4 224.0 L555.3 236.6 L544.9 252.7 L537.2 272.0 L532.6 293.9 L531.0 318.2 L532.6 344.3 L537.2 371.6 L544.9 399.7 L555.3 427.9 L568.4 455.6 L583.9 482.4 L601.4 507.6 L620.6 530.8 L641.0 551.4 L662.4 569.1 L684.2 583.5 L706.0 594.3 L727.3 601.3 L747.8 604.3 L767.0 603.3 L784.5 598.2 L799.9 589.3 L813.0 576.7 L823.5 560.6 L831.2 541.3 L835.8 519.4 Z" fill="url(#gWall)" stroke="#101014" stroke-width="1.75" stroke-linejoin="round" />
<g clip-path="url(#cOpen)">
<rect x="684.2" y="500" width="200" height="140" fill="url(#gWallD)"/>
<path d="M844.9 490.7 L843.4 464.6 L838.7 437.3 L831.1 409.2 L820.6 381.0 L807.5 353.3 L792.1 326.5 L774.6 301.3 L755.4 278.1 L734.9 257.5 L713.6 239.8 L691.8 225.4 L670.0 214.6 L648.6 207.7 L628.1 204.6 L609.0 205.7 L591.5 210.7 L576.0 219.6 L562.9 232.3 L552.4 248.4 L544.8 267.6 L540.1 289.6 L538.6 313.8 L540.1 339.9 L544.8 367.2 L552.4 395.3 L562.9 423.5 L576.0 451.3 L591.5 478.0 L609.0 503.3 L628.1 526.4 L648.6 547.1 L670.0 564.8 L691.8 579.1 L713.6 589.9 L734.9 596.9 L755.4 599.9 L774.6 598.9 L792.1 593.9 L807.5 584.9 L820.6 572.3 L831.1 556.2 L838.7 537.0 L843.4 515.0 Z" fill="#868696" stroke="#101014" stroke-width="1.75" stroke-linejoin="round" />
<path d="M537.3 314.6 L843.7 491.4" stroke="#66f487" stroke-width="1.7"/>
<path d="M691.2 403 L691.2 579.9" stroke="#dc6868" stroke-width="1.6"/>
</g>
<path d="M837.4 495.1 L835.8 469.0 L831.2 441.7 L823.5 413.6 L813.0 385.4 L799.9 357.7 L784.5 330.9 L767.0 305.7 L747.8 282.5 L727.3 261.9 L706.0 244.2 L684.2 229.8 L662.4 219.0 L641.0 212.0 L620.6 209.0 L601.4 210.0 L583.9 215.1 L568.4 224.0 L555.3 236.6 L544.9 252.7 L537.2 272.0 L532.6 293.9 L531.0 318.2 L532.6 344.3 L537.2 371.6 L544.9 399.7 L555.3 427.9 L568.4 455.6 L583.9 482.4 L601.4 507.6 L620.6 530.8 L641.0 551.4 L662.4 569.1 L684.2 583.5 L706.0 594.3 L727.3 601.3 L747.8 604.3 L767.0 603.3 L784.5 598.2 L799.9 589.3 L813.0 576.7 L823.5 560.6 L831.2 541.3 L835.8 519.4 Z" fill="none" stroke="#101014" stroke-width="1.75" stroke-linejoin="round" />
<path d="M690.5 579.9 L684.2 583.5" stroke="#101014" stroke-width="1.4"/>
<path d="M870 506 L900 523.5" stroke="#66f487" stroke-width="1.7"/>
<path d="M668.7 345.1 L691 403 L712.3 370.2" fill="none" stroke="#8fa8ee" stroke-width="1.8"/>
<path d="M631.1 399.5 L631.4 394.3 L632.4 389.6 L634.1 385.5 L636.3 382.1 L639.1 379.4 L665.8 364.0 L669.1 362.1 L672.8 361.0 L676.9 360.8 L681.3 361.4 L685.8 362.9 L690.5 365.2 L695.2 368.3 L699.7 372.1 L704.1 376.5 L708.2 381.4 L711.9 386.8 L715.2 392.5 L718.0 398.5 L720.3 404.5 L721.9 410.5 L722.9 416.3 L723.2 421.9 L722.9 427.1 L721.9 431.8 L720.3 435.9 L718.0 439.3 L715.2 442.0 L688.5 457.4 L685.2 459.3 L681.5 460.4 L677.4 460.6 L673.0 460.0 L668.5 458.5 L663.8 456.2 L659.2 453.1 L654.6 449.3 L650.2 444.9 L646.1 440.0 L642.4 434.6 L639.1 428.9 L636.3 422.9 L634.1 416.9 L632.4 410.9 L631.4 405.1 Z" fill="url(#gHub)" stroke="#101014" stroke-width="1.75" stroke-linejoin="round" />
<path d="M696.5 437.3 L696.2 431.7 L695.2 425.9 L693.6 419.9 L691.3 413.9 L688.5 407.9 L685.2 402.2 L681.5 396.8 L677.4 391.9 L673.0 387.5 L668.5 383.7 L663.8 380.6 L659.2 378.3 L654.6 376.8 L650.2 376.2 L646.1 376.4 L642.4 377.5 L639.1 379.4 L636.3 382.1 L634.1 385.5 L632.4 389.6 L631.4 394.3 L631.1 399.5 L631.4 405.1 L632.4 410.9 L634.1 416.9 L636.3 422.9 L639.1 428.9 L642.4 434.6 L646.1 440.0 L650.2 444.9 L654.6 449.3 L659.2 453.1 L663.8 456.2 L668.5 458.5 L673.0 460.0 L677.4 460.6 L681.5 460.4 L685.2 459.3 L688.5 457.4 L691.3 454.7 L693.6 451.3 L695.2 447.2 L696.2 442.5 Z" fill="#868696" stroke="#101014" stroke-width="1.75" stroke-linejoin="round" />
<path d="M755.2 305.6 L753.1 303.2 L751.1 300.7 L749.0 298.3 L746.9 296.0 L744.7 293.6 L742.6 291.3 L740.5 289.1 L738.3 286.8 L736.1 284.6 L733.9 282.5 L731.7 280.3 L729.5 278.2 L727.3 276.2 L725.0 274.2 L722.8 272.2 L720.5 270.3 L718.2 268.4 L715.9 266.5 L713.7 264.7 L711.4 262.9 L709.1 261.2 L706.8 259.5 L704.4 257.9 L702.1 256.3 L699.8 254.7 L697.5 253.2 L695.2 251.8 L692.8 250.4 L690.5 249.0 L688.2 247.7 L685.8 246.4 L683.5 245.2 L681.2 244.0 L678.9 242.9 L676.6 241.8 L674.2 240.8 L671.9 239.8 L669.6 238.8 L667.3 238.0 L665.1 237.1 L662.8 236.3 L660.5 235.6 L658.2 234.9 L656.0 234.3 L653.7 233.7 L651.5 233.2 L649.3 232.7 L647.1 232.3 L644.9 231.9 L642.7 231.6 L640.5 231.4 L638.4 231.1 L636.3 231.0 L634.1 230.9 L632.0 230.8 L629.9 230.8 L627.9 230.9 L625.8 231.0" fill="none" stroke="#14e614" stroke-width="2.5"/>
<circle cx="755.2" cy="305.6" r="3.6" fill="#14e614"/>
<circle cx="625.8" cy="231.0" r="3.6" fill="#14e614"/>
<path d="M712.3 370.2 L711.6 369.4 L710.9 368.6 L710.2 367.7 L709.5 366.9 L708.8 366.2 L708.1 365.4 L707.3 364.6 L706.6 363.9 L705.9 363.1 L705.1 362.4 L704.4 361.7 L703.6 361.0 L702.9 360.3 L702.1 359.6 L701.4 358.9 L700.6 358.3 L699.8 357.6 L699.1 357.0 L698.3 356.4 L697.5 355.8 L696.8 355.2 L696.0 354.7 L695.2 354.1 L694.4 353.6 L693.6 353.1 L692.9 352.6 L692.1 352.1 L691.3 351.6 L690.5 351.1 L689.7 350.7 L688.9 350.2 L688.1 349.8 L687.4 349.4 L686.6 349.1 L685.8 348.7 L685.0 348.3 L684.2 348.0 L683.5 347.7 L682.7 347.4 L681.9 347.1 L681.2 346.9 L680.4 346.6 L679.6 346.4 L678.9 346.2 L678.1 346.0 L677.4 345.8 L676.6 345.6 L675.9 345.5 L675.1 345.4 L674.4 345.3 L673.7 345.2 L672.9 345.1 L672.2 345.1 L671.5 345.0 L670.8 345.0 L670.1 345.0 L669.4 345.0 L668.7 345.1" fill="none" stroke="#14e614" stroke-width="2.5"/>
<circle cx="712.3" cy="370.2" r="3.6" fill="#14e614"/>
<circle cx="668.7" cy="345.1" r="3.6" fill="#14e614"/>
<path d="M621 291.5 L628.5 284.5 M624 294 L631 287" stroke="#e6260a" stroke-width="2.1"/>
<path d="M739 360.5 L746.5 353.5 M742 363 L749 356" stroke="#e6260a" stroke-width="2.1"/>
<path d="M676.5 366.4 L682.3 361.7" stroke="#e6260a" stroke-width="2.4"/>
<path d="M692 367.5 L694.5 369.5" stroke="#e6260a" stroke-width="1.6"/>
<path d="M691.0 403 L659 114" stroke="#fbf61a" stroke-width="2"/>
<path d="M691.0 403 L690.8 133.5" stroke="#fbf61a" stroke-width="2"/>
<path d="M691.0 403 L795.6 151.7" stroke="#fbf61a" stroke-width="2"/>
<path d="M668.7 345.1 L586 124.5" stroke="#fbf61a" stroke-width="2"/>
<path d="M712.3 370.2 L803.9 233.5" stroke="#fbf61a" stroke-width="2"/>
<path d="M672.6 240.1 L676.3 249.7 L671.2 250.3 Z" fill="#fbf61a"/>
<path d="M707.0 364.3 L706.4 372.7 L701.6 370.7 Z" fill="#fbf61a"/>
<path d="M588.7 132.3 L592.1 132.1 L595.4 132.0 L598.8 132.0 L602.2 132.1 L605.7 132.3 L609.2 132.6 L612.7 133.0 L616.2 133.4 L619.7 134.0 L623.3 134.6 L626.9 135.3 L630.5 136.1" fill="none" stroke="#fbf61a" stroke-width="1.9"/>
<path d="M644.7 140.0 L648.5 141.3 L652.3 142.6 L656.0 144.0 L659.8 145.5 L663.6 147.1 L667.5 148.8 L671.3 150.6 L675.1 152.4 L679.0 154.3 L682.8 156.4 L686.7 158.5 L690.5 160.6" fill="none" stroke="#fbf61a" stroke-width="1.9"/>
<path d="M588.7 132.3 L599.2 129.3 L599.3 135.1 Z" fill="#fbf61a"/>
<path d="M690.5 160.6 L679.9 158.2 L682.6 153.1 Z" fill="#fbf61a"/>
<path d="M690.5 143.6 L694.6 146.0 L698.6 148.5 L702.6 151.0 L706.7 153.6 L710.7 156.3 L714.8 159.1 L718.8 162.0 L722.8 165.0 L726.8 168.0 L730.8 171.1 L734.8 174.3 L738.7 177.5" fill="none" stroke="#fbf61a" stroke-width="1.9"/>
<path d="M754.7 191.5 L758.5 195.1 L762.4 198.8 L766.2 202.5 L770.0 206.3 L773.8 210.2 L777.5 214.1 L781.3 218.1 L785.0 222.2 L788.6 226.3 L792.2 230.5 L795.8 234.7 L799.4 239.0" fill="none" stroke="#fbf61a" stroke-width="1.9"/>
<path d="M690.5 143.6 L701.0 146.7 L697.9 151.6 Z" fill="#fbf61a"/>
<path d="M799.4 239.0 L790.4 232.9 L794.8 229.2 Z" fill="#fbf61a"/>
<text transform="matrix(0.2300 1.7600 -1.3620 -0.3430 638.3 136.5)" x="0" y="3.5" text-anchor="middle" font-family="Liberation Sans, sans-serif" font-size="10.6" fill="#fbf61a">29 <tspan dy="2.4">°</tspan></text>
<text transform="matrix(0.2300 1.7600 -1.3620 -0.3430 748.8 180.5)" x="0" y="3.5" text-anchor="middle" font-family="Liberation Sans, sans-serif" font-size="10.6" fill="#fbf61a">29 <tspan dy="2.4">°</tspan></text>
<text transform="matrix(0.1885 1.7250 -1.3940 -0.5510 654.0 75.0)" x="0" y="3.5" text-anchor="middle" font-family="Liberation Sans, sans-serif" font-size="10.0" fill="#fbf61a">R95 mm</text>
<text transform="matrix(-0.5180 1.2350 -1.3080 -1.3250 808.2 123.0)" x="0" y="3.5" text-anchor="middle" font-family="Liberation Sans, sans-serif" font-size="9.2" fill="#fbf61a">R32 mm</text>
</svg>
</div>
<div class="abs" style="left:338px;top:665px;width:256px;height:24px;background:#fff;border-right:1px solid #d4d4d4;border-bottom:1px solid #d9d9d9"></div>
<div class="abs" style="left:594px;top:665px;width:408px;height:1px;background:#a8a8a8"></div>
<svg class="abs" style="left:352px;top:668px;overflow:visible" width="13" height="16" viewBox="0 0 13 16" ><path d="M1 0.5 H8.5 L11.5 3.5 V15.5 H1 Z" fill="#f0f0f0" stroke="#858585" stroke-width="1"/><path d="M8.5 0.5 V3.5 H11.5" fill="none" stroke="#858585" stroke-width="0.8"/><circle cx="7.5" cy="5.7" r="2.8" fill="#e01010"/><path d="M2 7.4 L5.6 6 L9 7.4 V11.8 L5.4 13.6 L2 11.8 Z" fill="#3a78c4" stroke="#1f4a80" stroke-width="0.6"/><path d="M2 7.4 L5.4 8.8 L9 7.4 M5.4 8.8 V13.6" fill="none" stroke="#1f4a80" stroke-width="0.6"/></svg>
<div class="t" style="left:369px;top:670px;font-size:11px">FreeCAD Part Modeling Tutorial 137 : 1*</div>
<svg class="abs" style="left:566px;top:670px;overflow:visible" width="14" height="14" viewBox="0 0 14 14" ><rect x="0.6" y="0.6" width="12.8" height="12.8" rx="2" fill="#e9784e" stroke="#d63322" stroke-width="1.2"/><path d="M4 4 L10 10 M10 4 L4 10" stroke="#fff" stroke-width="2.2"/></svg>
</body></html>
